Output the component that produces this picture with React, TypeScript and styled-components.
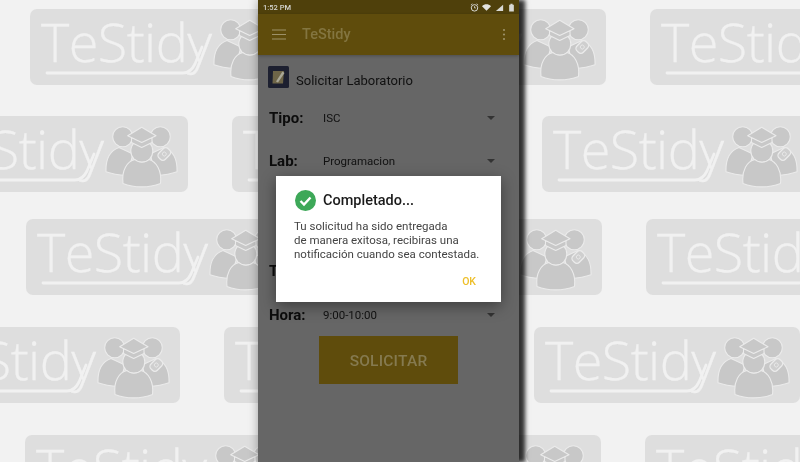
import React from "react";
import styled, { createGlobalStyle } from "styled-components";

const GlobalStyle = createGlobalStyle`
  html, body {
    margin: 0;
    padding: 0;
    background: #f2f2f2;
  }
`;

const Page = styled.div`
  width: 800px;
  height: 462px;
  display: grid;
  overflow: hidden;
  font-family: Roboto, "Liberation Sans", sans-serif;
`;

const Wallpaper = styled.div`
  grid-area: 1 / 1;
  filter: blur(0.5px);
`;

const TileRow = styled.div<{ $left: number; $top: number }>`
  display: flex;
  width: max-content;
  gap: 44px;
  margin-left: ${(p) => p.$left}px;
  margin-top: ${(p) => p.$top}px;
`;

const Tile = styled.div`
  width: 266px;
  height: 76px;
  flex: none;
  display: flex;
  border-radius: 7px;
  background: #dedede;
  padding: 0 0 0 11px;
  box-sizing: border-box;
`;

const Brand = styled.div`
  width: 172px;
  height: 76px;
  flex: none;
  display: grid;
`;

const BrandName = styled.span`
  grid-area: 1 / 1;
  font-family: "Open Sans", sans-serif;
  font-weight: 300;
  font-size: 54px;
  line-height: 76px;
  letter-spacing: -0.6px;
  color: #f1f1f1;
  margin-top: -6px;
  -webkit-text-stroke: 0.3px #f1f1f1;
`;

const BrandLine = styled.svg`
  grid-area: 1 / 1;
  width: 172px;
  height: 76px;
`;

const GroupIcon = styled.svg`
  width: 73px;
  height: 62px;
  flex: none;
  margin: 10px 0 0 0;
`;

const Phone = styled.div`
  grid-area: 1 / 1;
  justify-self: start;
  position: relative;
  width: 261px;
  height: 462px;
  margin-left: 258px;
  background: #666666;
  box-shadow: 6px 0 4px rgba(0, 0, 0, 0.75), 1px 0 10px rgba(0, 0, 0, 0.4);
  filter: blur(0.3px);
`;

const StatusBar = styled.div`
  height: 14px;
  background: #4f400b;
  display: flex;
  align-items: center;
  padding: 0 3px 0 5px;
  gap: 3.5px;
`;

const Clock = styled.span`
  font-size: 7.5px;
  font-weight: 500;
  color: #d8d8d4;
  flex: 1;
`;

const StatusIcon = styled.svg`
  width: 9px;
  height: 9px;
  flex: none;
`;

const AppBar = styled.div`
  height: 41px;
  background: #5f4c0c;
  display: flex;
  align-items: center;
  padding: 0 13px 0 14px;
  box-shadow: 0 1px 3px rgba(0, 0, 0, 0.25);
`;

const Hamburger = styled.svg`
  width: 14px;
  height: 11px;
  flex: none;
  margin-right: 16px;
`;

const AppTitle = styled.span`
  flex: 1;
  font-size: 14.5px;
  font-weight: 500;
  color: #837540;
`;

const Dots = styled.svg`
  width: 4px;
  height: 13px;
  flex: none;
`;

const Content = styled.div`
  padding: 11px 24px 0 10px;
`;

const TitleRow = styled.div`
  display: flex;
  align-items: center;
  gap: 7px;
  height: 22px;
  margin-bottom: 8px;
`;

const FormIcon = styled.svg`
  width: 21px;
  height: 22px;
  flex: none;
`;

const FormTitle = styled.span`
  font-size: 13px;
  color: #111111;
  margin-top: 6px;
`;

const Field = styled.div<{ $top?: number }>`
  display: flex;
  align-items: center;
  height: 43px;
  margin-top: ${(p) => p.$top ?? 0}px;
  margin-left: 1px;
`;

const FieldLabel = styled.span`
  width: 54px;
  flex: none;
  font-size: 15px;
  font-weight: 700;
  color: #0c0c0c;
`;

const FieldValue = styled.span`
  flex: 1;
  font-size: 11.5px;
  color: #111111;
`;

const Caret = styled.span`
  width: 0;
  height: 0;
  flex: none;
  border-left: 4px solid transparent;
  border-right: 4px solid transparent;
  border-top: 4px solid #333333;
`;

const SubmitButton = styled.button`
  display: block;
  width: 139px;
  height: 48px;
  margin: 0 0 0 51px;
  border: 0;
  padding: 2px 0 0;
  background: #5f4c0c;
  font-family: inherit;
  font-size: 15.5px;
  font-weight: 500;
  letter-spacing: 0.2px;
  color: #857a50;
`;

const Dialog = styled.div`
  position: absolute;
  left: 18px;
  top: 176px;
  width: 225px;
  height: 126px;
  box-sizing: border-box;
  padding: 13px 18px 0 18px;
  background: #ffffff;
  box-shadow: 0 4px 14px rgba(0, 0, 0, 0.4);
  display: flex;
  flex-direction: column;
`;

const DialogHeader = styled.div`
  display: flex;
  align-items: center;
  gap: 7px;
  height: 22px;
  margin-left: 1px;
`;

const CheckIcon = styled.svg`
  width: 21px;
  height: 21px;
  flex: none;
`;

const DialogTitle = styled.span`
  font-size: 14.5px;
  font-weight: 500;
  color: #1a1a1a;
`;

const DialogText = styled.p`
  margin: 8px -8px 0 0;
  font-size: 11.5px;
  line-height: 14px;
  color: #444444;
  white-space: pre-line;
`;

const DialogAction = styled.span`
  align-self: flex-end;
  margin-top: 14px;
  margin-right: 7px;
  font-size: 10.5px;
  font-weight: 500;
  color: #eebf2a;
`;

const rows = [
  { left: 30, top: 9 },
  { left: -78, top: 31 },
  { left: 26, top: 27 },
  { left: -86, top: 32 },
  { left: 25, top: 32 },
];

const Logo: React.FC = () => (
  <Tile>
    <Brand>
      <BrandName>TeStidy</BrandName>
      <BrandLine viewBox="0 0 172 76">
        <path
          d="M6 64H142C148 64 151 61 154 55L161 38"
          fill="none"
          stroke="#f1f1f1"
          strokeWidth="2.8"
          strokeLinecap="round"
        />
      </BrandLine>
    </Brand>
    <GroupIcon viewBox="0 0 73 62">
      <g fill="#c8c8c8" stroke="#ebebeb" strokeWidth="1.1" strokeLinejoin="round">
        <circle cx="17.7" cy="10.7" r="10" />
        <circle cx="55.3" cy="10.7" r="10" />
        <path d="M1 45.7C.6 34 4 25 14 21.5L28 28L22 49.5C14 49 7 48 1 45.7Z" />
        <path d="M72 45.7C72.4 34 69 25 59 21.5L45 28L51 49.5C59 49 66 48 72 45.7Z" />
        <ellipse cx="36.8" cy="25" rx="11" ry="11.5" />
        <path d="M18 57.5C16.5 44 22 35.5 30 33.5C33 37 41 37 44 33.5C51 35.5 57 44 55.5 57.5C44 62 29 62 18 57.5Z" />
        <path d="M26.5 12V16.5L36.7 21.5L47 16.5V12Z" />
        <path d="M36.7 1.3L22.7 9.7L36.7 16.5L51 9.7Z" />
      </g>
      <g transform="rotate(-45 59.3 28)" stroke="#ebebeb" fill="none">
        <rect x="52.8" y="23.5" width="13" height="9" rx="3.5" fill="#cfcfcf" strokeWidth="1.3" />
        <circle cx="59.3" cy="28" r="2" strokeWidth="0.8" />
      </g>
    </GroupIcon>
  </Tile>
);

const App: React.FC = () => (
  <>
    <GlobalStyle />
    <Page>
      <Wallpaper>
        {rows.map((row) => (
          <TileRow key={row.left} $left={row.left} $top={row.top}>
            <Logo />
            <Logo />
            <Logo />
          </TileRow>
        ))}
      </Wallpaper>
      <Phone>
        <StatusBar>
          <Clock>1:52 PM</Clock>
          <StatusIcon viewBox="0 0 10 10">
            <circle cx="5" cy="5.4" r="3.6" fill="none" stroke="#d8d8d4" strokeWidth="1.1" />
            <path d="M5 3.5V5.5H6.6M1 2.2L2.6 .8M9 2.2L7.4 .8" fill="none" stroke="#d8d8d4" strokeWidth="0.9" />
          </StatusIcon>
          <StatusIcon viewBox="0 0 10 10">
            <path d="M0 3.6C3 .8 7 .8 10 3.6L5 8.6Z" fill="#e4e4e0" />
          </StatusIcon>
          <StatusIcon viewBox="0 0 10 10">
            <path d="M1 9L9 2V9Z" fill="#d8d8d4" />
          </StatusIcon>
          <StatusIcon viewBox="0 0 10 10">
            <path d="M2.4 2H3.8V.8H6.2V2H7.6V9.4H2.4Z" fill="#d8d8d4" />
          </StatusIcon>
        </StatusBar>
        <AppBar>
          <Hamburger viewBox="0 0 14 11">
            <path d="M0 1H14M0 5.5H14M0 10H14" stroke="#9d9168" strokeWidth="1.2" />
          </Hamburger>
          <AppTitle>TeStidy</AppTitle>
          <Dots viewBox="0 0 4 13">
            <circle cx="2" cy="2" r="1.1" fill="#9d9168" />
            <circle cx="2" cy="6.5" r="1.1" fill="#9d9168" />
            <circle cx="2" cy="11" r="1.1" fill="#9d9168" />
          </Dots>
        </AppBar>
        <Content>
          <TitleRow>
            <FormIcon viewBox="0 0 21 22">
              <rect width="21" height="22" rx="1.5" fill="#1d2030" />
              <path d="M5 5H16L15 17.5H4.5Z" fill="#6e6548" />
              <path d="M8 15.5L14.5 5.5L16.5 7L10 16.5Z" fill="#a9a797" />
            </FormIcon>
            <FormTitle>Solicitar Laboratorio</FormTitle>
          </TitleRow>
          <Field>
            <FieldLabel>Tipo:</FieldLabel>
            <FieldValue>ISC</FieldValue>
            <Caret />
          </Field>
          <Field>
            <FieldLabel>Lab:</FieldLabel>
            <FieldValue>Programacion</FieldValue>
            <Caret />
          </Field>
          <Field $top={67}>
            <FieldLabel>T</FieldLabel>
          </Field>
          <Field $top={1}>
            <FieldLabel>Hora:</FieldLabel>
            <FieldValue>9:00-10:00</FieldValue>
            <Caret />
          </Field>
          <SubmitButton>SOLICITAR</SubmitButton>
        </Content>
        <Dialog>
          <DialogHeader>
            <CheckIcon viewBox="0 0 21 21">
              <circle cx="10.5" cy="10.5" r="10.5" fill="#3da858" />
              <path d="M5.5 11L9 14.5L15.5 7.5" fill="none" stroke="#ffffff" strokeWidth="2.4" />
            </CheckIcon>
            <DialogTitle>Completado...</DialogTitle>
          </DialogHeader>
          <DialogText>
            {"Tu solicitud ha sido entregada\nde manera exitosa, recibiras una\nnotificación cuando sea contestada."}
          </DialogText>
          <DialogAction>OK</DialogAction>
        </Dialog>
      </Phone>
    </Page>
  </>
);

export default App;
